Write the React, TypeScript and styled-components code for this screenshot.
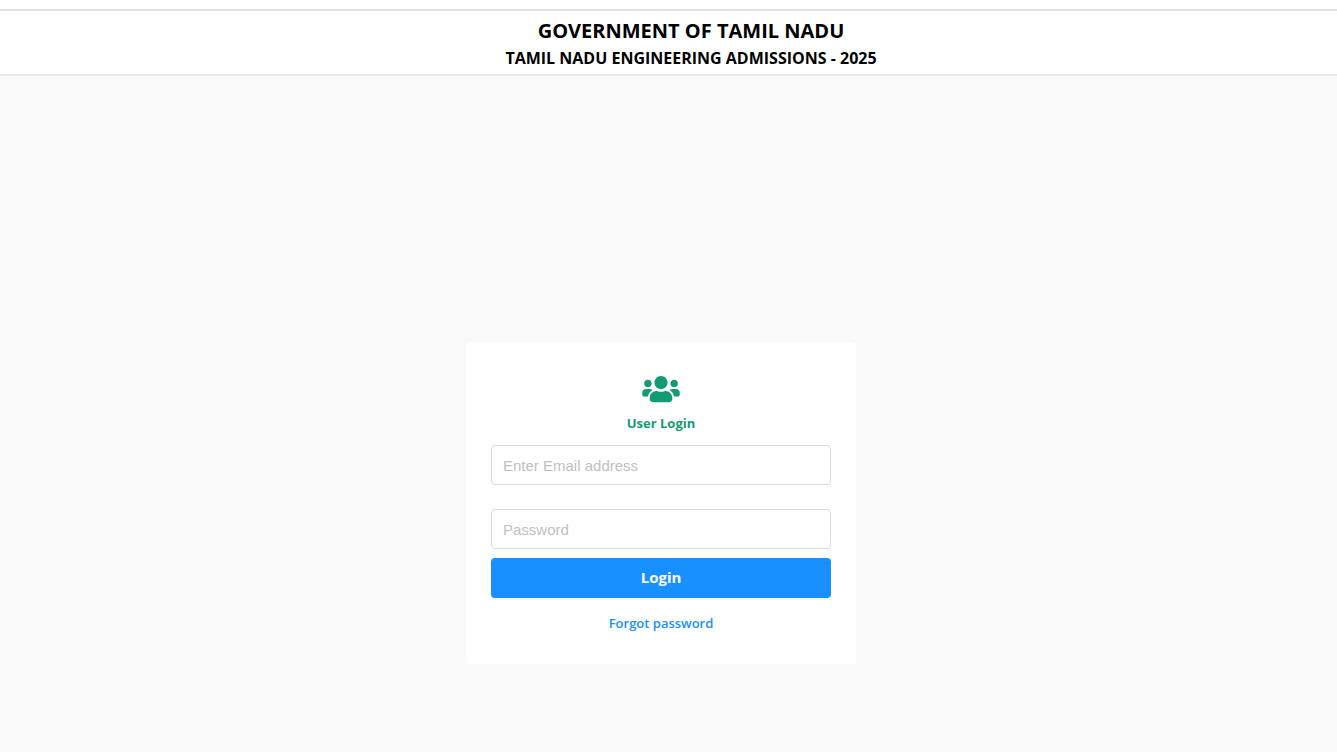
import React from "react";
import styled, { createGlobalStyle } from "styled-components";
import { FaUsers } from "react-icons/fa";

const uiFont = `"Segoe UI", "Open Sans", "Noto Sans", sans-serif`;

const GlobalStyle = createGlobalStyle`
  *, *::before, *::after { box-sizing: border-box; }
  html, body, #root { height: 100%; }
  body {
    margin: 0;
    background: #f9f9f9;
    font-family: ${uiFont};
  }
`;

const Page = styled.div`
  display: flex;
  flex-direction: column;
  min-height: 100%;
`;

const TopStrip = styled.div`
  height: 11px;
  background: #ffffff;
  border-bottom: 2px solid #e2e2e2;
`;

const Header = styled.header`
  display: flex;
  flex-direction: column;
  align-items: center;
  padding: 7px 0 2px 45px;
  background: #ffffff;
  border-bottom: 2px solid #e8e8e8;
  color: #000000;
  text-align: center;
`;

const Title = styled.h1`
  margin: 0;
  font-size: 20px;
  line-height: 26px;
  font-weight: 700;
`;

const Subtitle = styled.h2`
  margin: 0;
  font-size: 16px;
  line-height: 28px;
  font-weight: 700;
`;

const Main = styled.main`
  flex: 1;
  display: flex;
  flex-direction: column;
  align-items: center;
  justify-content: flex-end;
  padding: 24px 15px 88px 0;
`;

const LoginCard = styled.form`
  display: flex;
  flex-direction: column;
  width: 100%;
  max-width: 390px;
  padding: 32px 25px 30px;
  background: #ffffff;
  border-radius: 4px;
`;

const CardHeading = styled.div`
  display: flex;
  flex-direction: column;
  align-items: center;
  color: #159b74;
`;

const UsersIcon = styled(FaUsers)`
  width: 38px;
  height: 30px;
`;

const CardTitle = styled.h3`
  margin: 8px 0 11px;
  font-size: 13px;
  line-height: 22px;
  font-weight: 700;
`;

const TextField = styled.input`
  width: 100%;
  height: 40px;
  padding: 0 11px;
  border: 1px solid #d9d9d9;
  border-radius: 4px;
  background: #ffffff;
  color: #333333;
  font-family: Arial, "Liberation Sans", sans-serif;
  font-size: 15px;
  outline: none;

  &::placeholder { color: #bfbfbf; opacity: 1; }
  &:focus { border-color: #1890ff; }
  & + & { margin-top: 24px; }
`;

const LoginButton = styled.button`
  height: 40px;
  margin-top: 9px;
  padding: 0 15px 2px;
  border: 0;
  border-radius: 4px;
  background: #1890ff;
  box-shadow: 0 2px 0 rgba(0, 0, 0, 0.04);
  color: #ffffff;
  font-family: ${uiFont};
  font-size: 15px;
  font-weight: 700;
  cursor: pointer;
`;

const ForgotLink = styled.a`
  align-self: center;
  margin-top: 14px;
  color: #1890ff;
  font-size: 13px;
  line-height: 22px;
  font-weight: 600;
  text-decoration: none;
`;

export default function App() {
  return (
    <Page>
      <GlobalStyle />
      <TopStrip />
      <Header>
        <Title>GOVERNMENT OF TAMIL NADU</Title>
        <Subtitle>TAMIL NADU ENGINEERING ADMISSIONS - 2025</Subtitle>
      </Header>
      <Main>
        <LoginCard onSubmit={(event: React.FormEvent) => event.preventDefault()}>
          <CardHeading>
            <UsersIcon aria-hidden="true" />
            <CardTitle>User Login</CardTitle>
          </CardHeading>
          <TextField type="email" aria-label="Email address" placeholder="Enter Email address" />
          <TextField type="password" aria-label="Password" placeholder="Password" />
          <LoginButton type="submit">Login</LoginButton>
          <ForgotLink href="#forgot-password">Forgot password</ForgotLink>
        </LoginCard>
      </Main>
    </Page>
  );
}
